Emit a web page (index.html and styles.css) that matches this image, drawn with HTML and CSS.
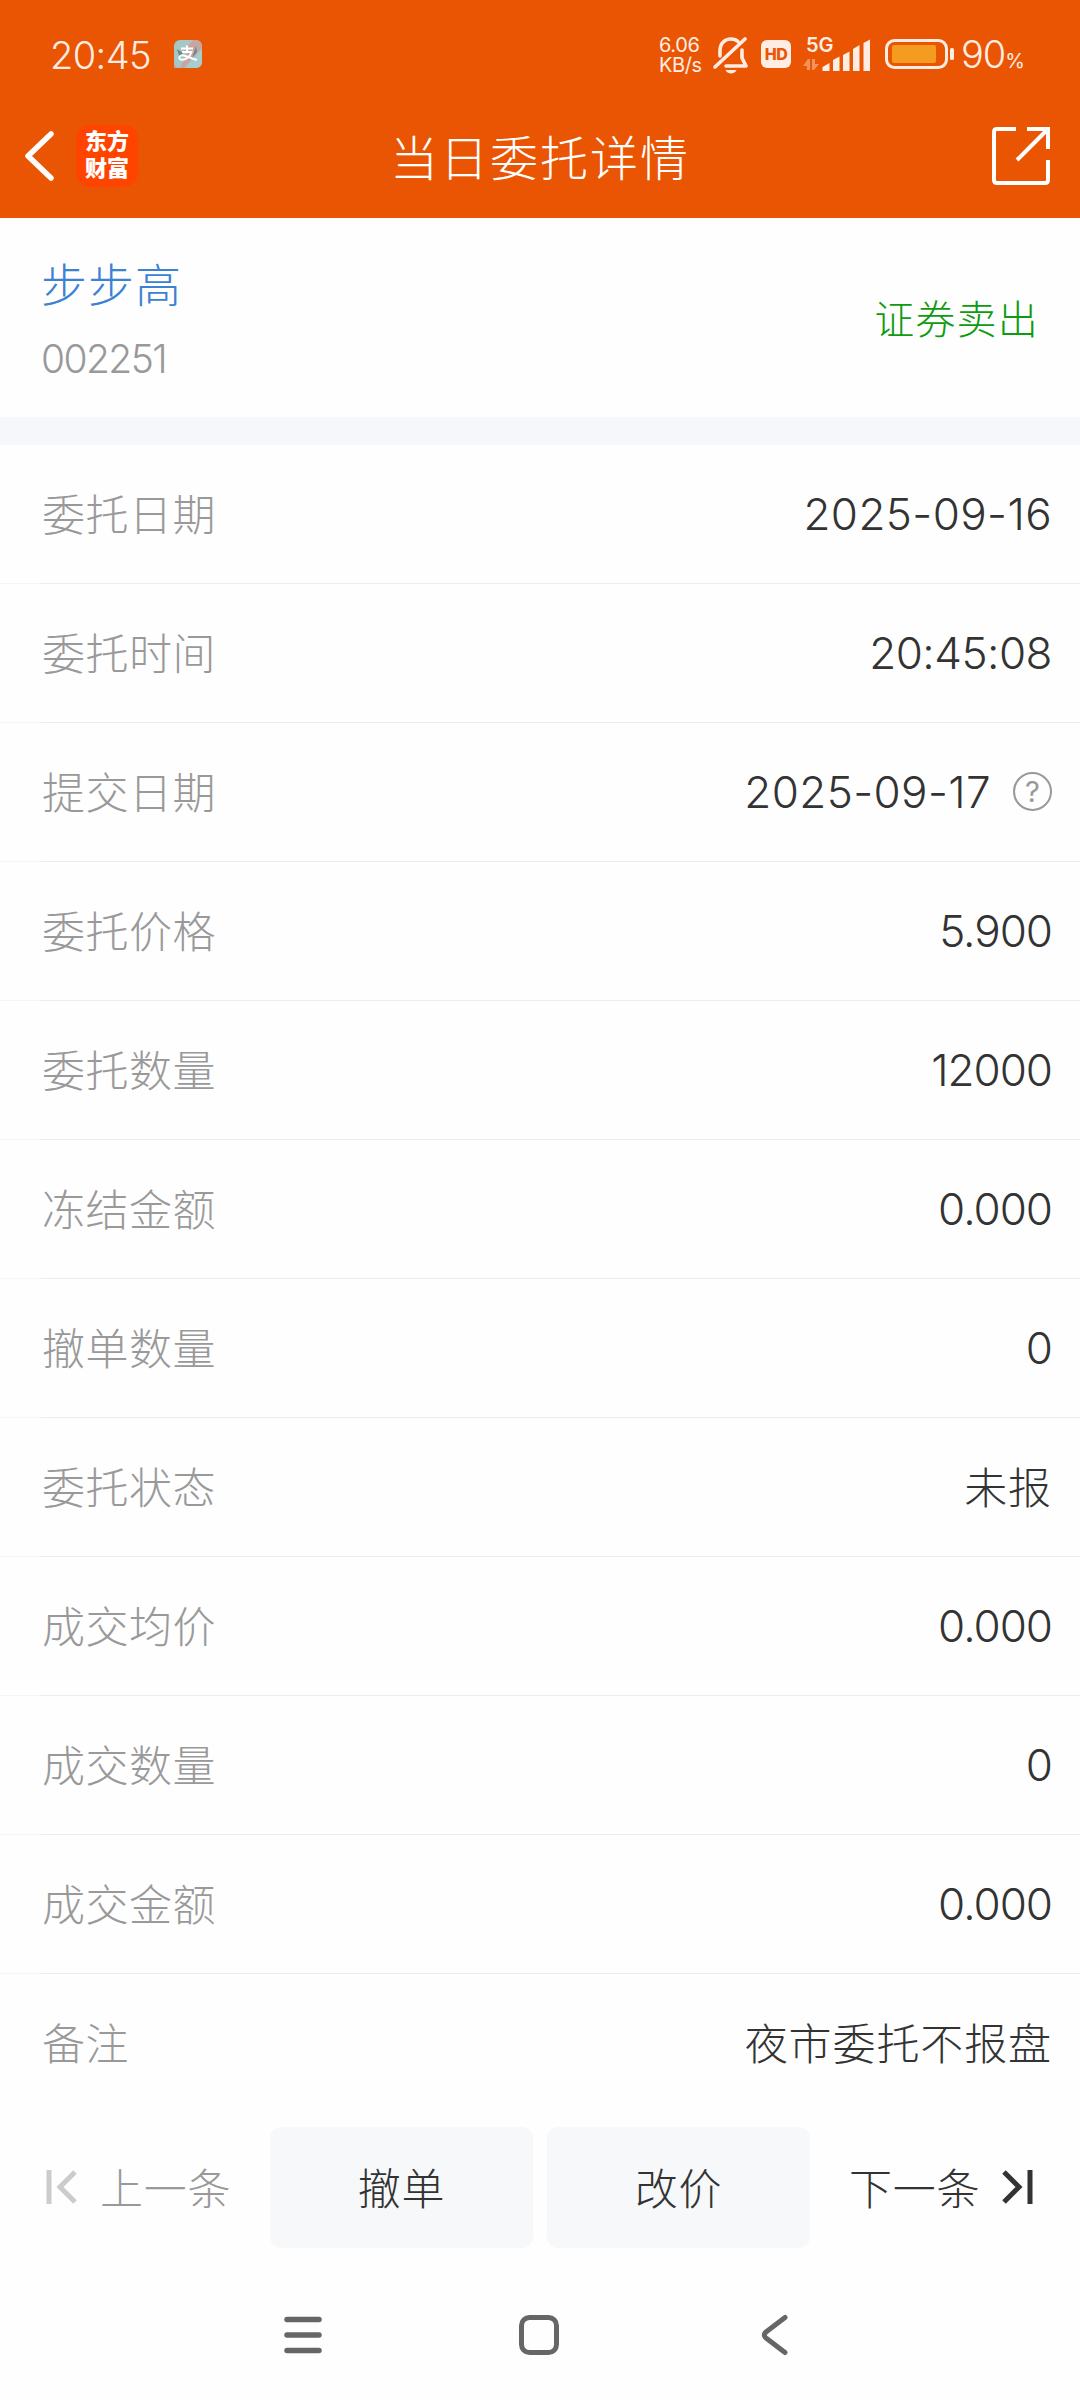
FILE: index.html
```html
<!DOCTYPE html>
<html lang="zh-CN">
<head>
    <meta charset="UTF-8">
    <meta name="viewport" content="width=device-width, initial-scale=1.0">
    <title>当日委托详情</title>
    <link rel="stylesheet" href="styles.css">
</head>
<body>
    <header class="header">
        <!-- 状态栏 -->
        <div class="status-bar">
            <span class="clock">20:45</span>
            <svg class="alipay" width="28" height="28" viewBox="0 0 28 28">
                <rect width="28" height="28" rx="6" fill="#a5c8c6"/>
                <path d="M0 22V28H10L28 8V6a6 6 0 0 0-6-6H19Z" fill="#c6a5a3"/>
                <path d="M0 8V22a6 6 0 0 0 6 6L14 12Z" fill="#a5c8c6"/>
                <path d="M12 28H22a6 6 0 0 0 6-6V10Z" fill="#a8cdd0"/>
                <path d="M3 9l6 4-3 6zM22 6l1 6-5 6z" fill="#6f8785"/>
                <path d="M7 8.500H19M13 5.500V12M8 12H17.500C16 17 11 20.500 7 19.500C3.500 18 6 14.500 10 15.500C14 16.500 18 19 23 20" fill="none" stroke="#fff" stroke-width="2"/>
            </svg>
            <div class="status-right">
                <div class="net-speed"><span>6.06</span><span>KB/s</span></div>
                <svg class="bell" width="36" height="38" viewBox="0 0 36 38" fill="none" stroke="#ffede3" stroke-width="3.600" stroke-linecap="round" stroke-linejoin="round">
                    <path d="M7 20V15C7 7 12 3 18 3C21 3 23.500 4 25 5.500M29 14V22L33 30H13M32 3L2 31"/>
                    <path d="M12.500 34H23.500C22 38.500 14 38.500 12.500 34Z" fill="#ffede3" stroke="none"/>
                </svg>
                <span class="hd">HD</span>
                <div class="signal">
                    <span class="net-type">5G</span>
                    <svg width="68" height="34" viewBox="0 0 68 34" fill="#ffede3">
                        <path d="M0 28L5 21H7V32H4V28ZM9 21H12V26H16L11 32H9Z" opacity="0.4"/>
                        <path d="M19.500 33V29L26.500 25V33ZM30 33V22L36.500 18.500V33ZM40 33V17L46.500 13.500V33ZM50 33V11L56.500 7V33ZM60.500 33V5L67 1.500V33Z"/>
                    </svg>
                </div>
                <svg class="battery" width="69" height="30" viewBox="0 0 69 30">
                    <rect x="1.500" y="1.500" width="60" height="27" rx="8" fill="none" stroke="#ffede3" stroke-width="3"/>
                    <rect x="7" y="6" width="44" height="18" rx="2" fill="#f39c1f"/>
                    <rect x="65" y="9" width="4" height="12" rx="1.500" fill="#ffede3"/>
                </svg>
                <span class="percent">90<small>%</small></span>
            </div>
        </div>
        <!-- 标题栏 -->
        <div class="title-bar">
            <div class="title-left">
                <svg width="30" height="50" viewBox="0 0 30 50" fill="none" stroke="#fff" stroke-width="5.500" stroke-linecap="round" stroke-linejoin="round">
                    <path d="M26 3L3 25L26 47"/>
                </svg>
                <div class="logo"><span>东方</span><span>财富</span></div>
            </div>
            <h1 class="title">当日委托详情</h1>
            <svg class="share" width="58" height="58" viewBox="0 0 58 58" fill="none" stroke="#fff" stroke-width="4">
                <path d="M24 2H5Q2 2 2 5V53Q2 56 5 56H53Q56 56 56 53V33"/>
                <path d="M35 2H56V22M55 3L25 33"/>
            </svg>
        </div>
    </header>

    <section class="stock">
        <div class="stock-info">
            <span class="stock-name">步步高</span>
            <span class="stock-code">002251</span>
        </div>
        <span class="direction">证券卖出</span>
    </section>

    <ul class="list">
        <li class="row"><span class="label">委托日期</span><span class="value date">2025-09-16</span></li>
        <li class="row"><span class="label">委托时间</span><span class="value time">20:45:08</span></li>
        <li class="row">
            <span class="label">提交日期</span>
            <span class="value date">2025-09-17</span>
            <span class="help">?</span>
        </li>
        <li class="row"><span class="label">委托价格</span><span class="value">5.900</span></li>
        <li class="row"><span class="label">委托数量</span><span class="value">12000</span></li>
        <li class="row"><span class="label">冻结金额</span><span class="value">0.000</span></li>
        <li class="row"><span class="label">撤单数量</span><span class="value">0</span></li>
        <li class="row"><span class="label">委托状态</span><span class="value cn">未报</span></li>
        <li class="row"><span class="label">成交均价</span><span class="value">0.000</span></li>
        <li class="row"><span class="label">成交数量</span><span class="value">0</span></li>
        <li class="row"><span class="label">成交金额</span><span class="value">0.000</span></li>
        <li class="row"><span class="label">备注</span><span class="value cn">夜市委托不报盘</span></li>
    </ul>

    <!-- 底部操作 -->
    <div class="actions">
        <a class="step prev">
            <svg width="31" height="34" viewBox="0 0 31 34" fill="none" stroke="#ccc" stroke-width="5">
                <path d="M3 0V34M29 2L14 17L29 32"/>
            </svg>
            <span>上一条</span>
        </a>
        <a class="btn">撤单</a>
        <a class="btn">改价</a>
        <a class="step next">
            <span>下一条</span>
            <svg width="31" height="34" viewBox="0 0 31 34" fill="none" stroke="#333" stroke-width="5">
                <path d="M28 0V34M2 2L17 17L2 32"/>
            </svg>
        </a>
    </div>

    <!-- 系统导航 -->
    <nav class="nav-bar">
        <svg width="42" height="42" viewBox="0 0 42 42" fill="none" stroke="#666" stroke-width="5.500" stroke-linecap="round">
            <path d="M5 5.500H37M5 21H37M5 36.500H37"/>
        </svg>
        <svg width="42" height="42" viewBox="0 0 42 42" fill="none" stroke="#666" stroke-width="5">
            <rect x="3.500" y="3.500" width="35" height="35" rx="8"/>
        </svg>
        <svg width="42" height="42" viewBox="0 0 42 42" fill="none" stroke="#666" stroke-width="5" stroke-linecap="round">
            <path d="M31 3.500L12 18Q8.500 21 12 24L31 38.500"/>
        </svg>
    </nav>
</body>
</html>
```

FILE: styles.css
```css
* {
    box-sizing: border-box;
}
body {
    margin: 0;
    width: 1080px;
    height: 2400px;
    background: #fefefe;
    color: #333;
    font-family: Inter, "Noto Sans CJK SC", sans-serif;
    font-weight: 300;
    overflow: hidden;
}
.header {
    height: 218px;
    background: #ea5504;
    color: #fff;
}

/* 状态栏 */
.status-bar {
    display: flex;
    align-items: center;
    height: 110px;
    padding: 0 56px 0 50px;
    color: #ffede3;
}
.clock {
    width: 124px;
    font-size: 38px;
    line-height: 40px;
    letter-spacing: -0.6px;
}
.alipay {
    margin-bottom: 2px;
}
.status-right {
    display: flex;
    align-items: center;
    margin-left: auto;
}
.net-speed {
    display: flex;
    flex-direction: column;
    width: 54px;
    margin-left: 1px;
    font-size: 20px;
    font-weight: 400;
    line-height: 20px;
    letter-spacing: -0.4px;
}
.bell {
    margin-right: 12px;
}
.hd {
    width: 30px;
    height: 28px;
    margin: 0 12px 2px 0;
    border-radius: 6px;
    background: #ffede3;
    color: #ea5504;
    font-size: 16px;
    font-weight: 800;
    line-height: 28px;
    letter-spacing: -0.5px;
    text-align: center;
}
.signal {
    position: relative;
    height: 34px;
    margin-right: 14px;
}
.net-type {
    position: absolute;
    top: -3px;
    left: 3px;
    font-size: 20px;
    font-weight: 600;
    line-height: 20px;
}
.battery {
    margin: 0 7px 2px 0;
}
.percent {
    width: 63px;
    padding-top: 4px;
    font-size: 38px;
    line-height: 40px;
    letter-spacing: -1px;
    white-space: nowrap;
}
.percent small {
    font-size: 20px;
    font-weight: 400;
}

/* 标题栏 */
.title-bar {
    display: grid;
    grid-template-columns: 1fr auto 1fr;
    align-items: center;
    height: 91px;
    padding: 0 30px 0 25px;
}
.title-left {
    display: flex;
    align-items: center;
    gap: 21px;
}
.logo {
    display: flex;
    flex-direction: column;
    align-items: center;
    justify-content: center;
    width: 62px;
    height: 62px;
    padding-bottom: 2px;
    border-radius: 14px;
    background: #ff4400;
    font-size: 22px;
    font-weight: 900;
    line-height: 27px;
}
.title {
    margin: 0;
    padding: 6px 0 0 5px;
    font-size: 48px;
    font-weight: 300;
    line-height: 60px;
    letter-spacing: 2px;
}
.share {
    justify-self: end;
}

/* 股票信息 */
.stock {
    display: flex;
    align-items: center;
    justify-content: space-between;
    height: 199px;
    padding: 0 41px 0 41px;
}
.stock-info {
    display: flex;
    flex-direction: column;
    gap: 20px;
    padding-top: 4px;
}
.stock-name {
    color: #3b82d2;
    font-size: 46px;
    line-height: 58px;
    letter-spacing: 1px;
}
.stock-code {
    color: #999;
    font-size: 39px;
    line-height: 50px;
    letter-spacing: -1.6px;
}
.direction {
    padding-bottom: 2px;
    color: #0f9a0f;
    font-size: 40px;
    letter-spacing: 1.2px;
}

/* 委托明细 */
.list {
    margin: 0;
    padding: 0;
    border-top: 28px solid #f6f7fa;
    list-style: none;
}
.row {
    display: flex;
    align-items: center;
    height: 139px;
    padding: 0 28px 2px 42px;
    /* 分割线左侧缩进部分颜色更浅 */
    background: linear-gradient(to right, #f6f6f6 41px, #ececec 41px) bottom / 100% 1px no-repeat;
}
.row:last-child {
    background: none;
}
.label {
    margin-right: auto;
    padding-bottom: 4px;
    color: #999;
    font-size: 43px;
    letter-spacing: 0.5px;
}
.value {
    font-size: 44px;
    letter-spacing: -1px;
}
.date {
    letter-spacing: 0.4px;
}
.time {
    letter-spacing: -0.5px;
}
.cn {
    padding-bottom: 4px;
    font-size: 43px;
    letter-spacing: 0.9px;
}
.help {
    width: 39px;
    height: 39px;
    margin-left: 22px;
    border: 2px solid #999;
    border-radius: 50%;
    color: #999;
    font-size: 29px;
    font-weight: 400;
    line-height: 35px;
    text-align: center;
}

/* 底部操作 */
.actions {
    display: flex;
    align-items: center;
    height: 121px;
    margin-top: 14px;
    font-size: 43px;
    letter-spacing: 0.7px;
}
.step {
    display: flex;
    align-items: center;
    gap: 23px;
}
.step span {
    padding-bottom: 3px;
}
.step svg {
    margin-bottom: 2px;
}
.prev {
    width: 270px;
    padding-left: 46px;
    color: #999;
}
.next {
    gap: 22px;
    margin-left: 25px;
}
.btn {
    width: 263px;
    height: 121px;
    margin-right: 14px;
    padding-top: 2px;
    border-radius: 11px;
    background: #f7f8fa;
    line-height: 121px;
    text-align: center;
}

/* 系统导航 */
.nav-bar {
    display: flex;
    justify-content: center;
    gap: 194px;
    padding: 66px 3px 0 0;
}
```
